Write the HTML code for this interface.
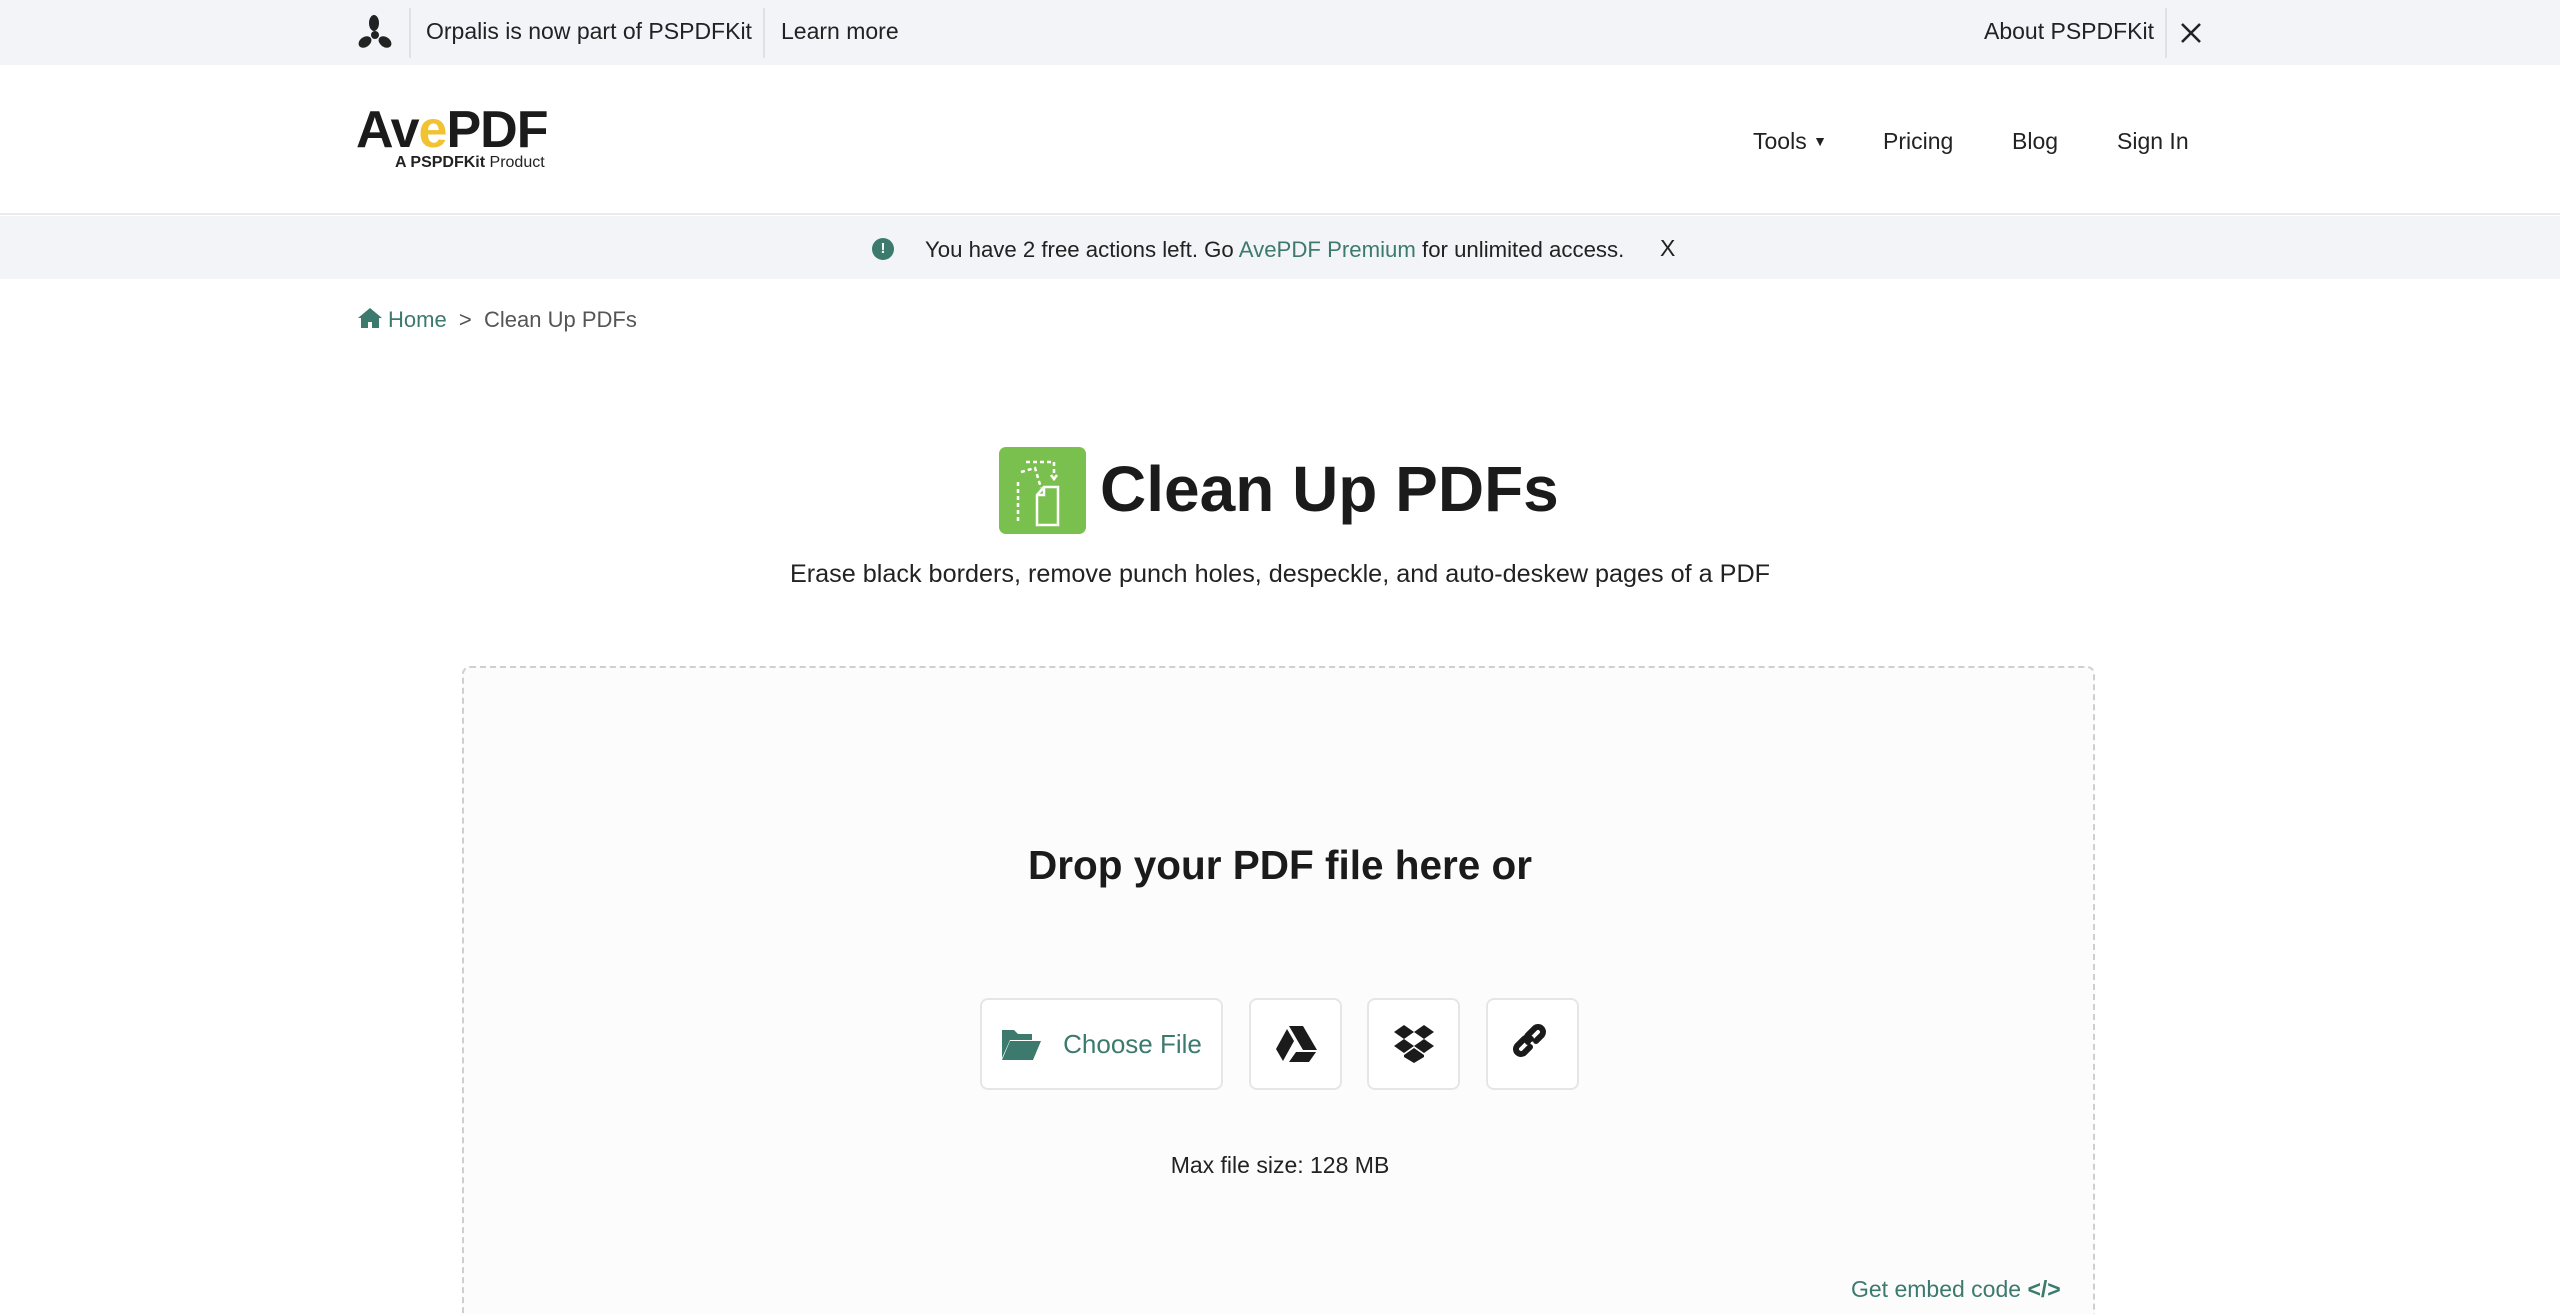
<!DOCTYPE html>
<html><head><meta charset="utf-8"><style>
*{margin:0;padding:0;box-sizing:border-box}
html,body{width:2560px;height:1314px;overflow:hidden}
body{background:#fff;font-family:"Liberation Sans","DejaVu Sans",sans-serif;color:#222;position:relative}
.a{position:absolute;white-space:nowrap}
.top{position:absolute;left:0;top:0;width:2560px;height:65px;background:#f3f4f8}
.nav{position:absolute;left:0;top:65px;width:2560px;height:150px;background:#fff;border-bottom:2px solid #e8ebef}
.notice{position:absolute;left:0;top:216px;width:2560px;height:63px;background:#f3f4f8}
.green{color:#3d7a6e}
.drop{position:absolute;left:462px;top:666px;width:1633px;height:700px;border:2px dashed #cfcfcf;border-radius:8px;background:#fcfcfc}
.btn{position:absolute;top:998px;height:92px;border:2px solid #e6e6e6;border-radius:8px;background:#fff;display:flex;align-items:center;justify-content:center}
</style></head><body>
<div class="top"></div>
<svg class="a" style="left:356px;top:14px" width="38" height="38" viewBox="0 0 38 38"><g fill="#222"><ellipse cx="18" cy="9" rx="5" ry="8"/><ellipse cx="9" cy="28" rx="7" ry="5" transform="rotate(-35 9 28)"/><ellipse cx="29" cy="28" rx="7" ry="5" transform="rotate(35 29 28)"/><circle cx="19" cy="21" r="4"/></g></svg>
<div class="a" style="left:409px;top:8px;width:2px;height:50px;background:#dfe1e6"></div>
<div class="a" style="left:426px;top:18px;font-size:23px;color:#222">Orpalis is now part of PSPDFKit</div>
<div class="a" style="left:763px;top:8px;width:2px;height:50px;background:#dfe1e6"></div>
<div class="a" style="left:781px;top:18px;font-size:23px;color:#222">Learn more</div>
<div class="a" style="left:1984px;top:18px;font-size:23px;color:#222">About PSPDFKit</div>
<div class="a" style="left:2165px;top:8px;width:2px;height:50px;background:#dfe1e6"></div>
<svg class="a" style="left:2180px;top:22px" width="22" height="22" viewBox="0 0 22 22"><path d="M2 2L20 20M20 2L2 20" stroke="#222" stroke-width="2.6"/></svg>

<div class="nav"></div>
<div class="a" style="left:356px;top:100px;font-size:52px;font-weight:bold;color:#1b1b1b;letter-spacing:-1px">Av<span style="color:#f1c232">e</span>PDF</div>
<div class="a" style="left:395px;top:154px;font-size:16px;color:#222"><b>A PSPDFKit</b> Product</div>
<div class="a" style="left:1753px;top:128px;font-size:23px;color:#222">Tools <span style="font-size:14px;vertical-align:3px">▼</span></div>
<div class="a" style="left:1883px;top:128px;font-size:23px;color:#222">Pricing</div>
<div class="a" style="left:2012px;top:128px;font-size:23px;color:#222">Blog</div>
<div class="a" style="left:2117px;top:128px;font-size:23px;color:#222">Sign In</div>

<div class="notice"></div>
<div class="a" style="left:872px;top:238px;width:22px;height:22px;border-radius:50%;background:#3d7a6e;color:#fff;font-size:15px;font-weight:bold;text-align:center;line-height:22px">!</div>
<div class="a" style="left:925px;top:237px;font-size:22.2px;color:#222">You have 2 free actions left. Go <span class="green">AvePDF Premium</span> for unlimited access.</div>
<div class="a" style="left:1660px;top:235px;font-size:23px;color:#222">X</div>

<svg class="a" style="left:357px;top:307px" width="26" height="22" viewBox="0 0 26 22"><path d="M13 1L1 11h3v10h7v-6h4v6h7V11h3z" fill="#3d7a6e"/></svg>
<div class="a" style="left:388px;top:307px;font-size:22px"><span class="green">Home</span><span style="color:#555">&nbsp;&nbsp;&gt;&nbsp;&nbsp;Clean Up PDFs</span></div>

<div class="a" style="left:999px;top:447px;width:87px;height:87px;border-radius:7px;background:#7ac04f"></div>
<svg class="a" style="left:999px;top:447px" width="87" height="87" viewBox="0 0 87 87"><g fill="none" stroke="#fff" stroke-width="2.5"><path d="M27 15h28v14" stroke-dasharray="4 3"/><path d="M52 28l3 4 3-4"/><path d="M22 25l14-4 6 20" stroke-dasharray="4 3"/><path d="M19 35v40" stroke-dasharray="4 3"/><path d="M45 40h14v38H38V48z"/><path d="M45 40v8h-7"/></g></svg>
<div class="a" style="left:1100px;top:452px;font-size:64px;font-weight:bold;color:#1b1b1b">Clean Up PDFs</div>
<div class="a" style="left:0;width:2560px;text-align:center;top:560px;font-size:25.2px;color:#222">Erase black borders, remove punch holes, despeckle, and auto-deskew pages of a PDF</div>

<div class="drop"></div>
<div class="a" style="left:0;width:2560px;text-align:center;top:842px;font-size:40.5px;font-weight:bold;color:#1b1b1b">Drop your PDF file here or</div>
<div class="btn" style="left:980px;width:243px"><svg width="40" height="34" viewBox="0 0 40 34" style="margin-right:22px"><path d="M1 3h12l4 4h14v6H9L1 31z" fill="#3d7a6e"/><path d="M9 14h31l-8 19H1z" fill="#3d7a6e"/></svg><span class="green" style="font-size:26px">Choose File</span></div>
<div class="btn" style="left:1249px;width:93px"><svg width="42" height="38" viewBox="0 0 42 38"><path d="M14 1h14l14 24H28z" fill="#1b1b1b"/><path d="M12 4l7 12L8 36 1 24z" fill="#1b1b1b"/><path d="M21 27h20l-7 10H14z" fill="#1b1b1b"/></svg></div>
<div class="btn" style="left:1367px;width:93px"><svg width="42" height="40" viewBox="0 0 42 40"><g fill="#1b1b1b"><path d="M11 1l10 7-10 7L1 8z"/><path d="M31 1l10 7-10 7-10-7z"/><path d="M11 15l10 7-10 7L1 22z"/><path d="M31 15l10 7-10 7-10-7z"/><path d="M11 31l10-7 10 7v2l-10 6-10-6z"/></g></svg></div>
<div class="btn" style="left:1486px;width:93px"><svg width="40" height="40" viewBox="0 0 40 40"><g fill="none" stroke="#1b1b1b" stroke-width="6" stroke-linecap="round"><path d="M17 23l-6 6a5 5 0 0 1-7-7l7-7a5 5 0 0 1 7 0"/><path d="M23 17l6-6a5 5 0 0 0-7-7l-7 7a5 5 0 0 0 0 7"/></g></svg></div>
<div class="a" style="left:0;width:2560px;text-align:center;top:1152px;font-size:23px;color:#222">Max file size: 128 MB</div>
<div class="a green" style="left:1851px;top:1276px;font-size:23px">Get embed code <b>&lt;/&gt;</b></div>
</body></html>
